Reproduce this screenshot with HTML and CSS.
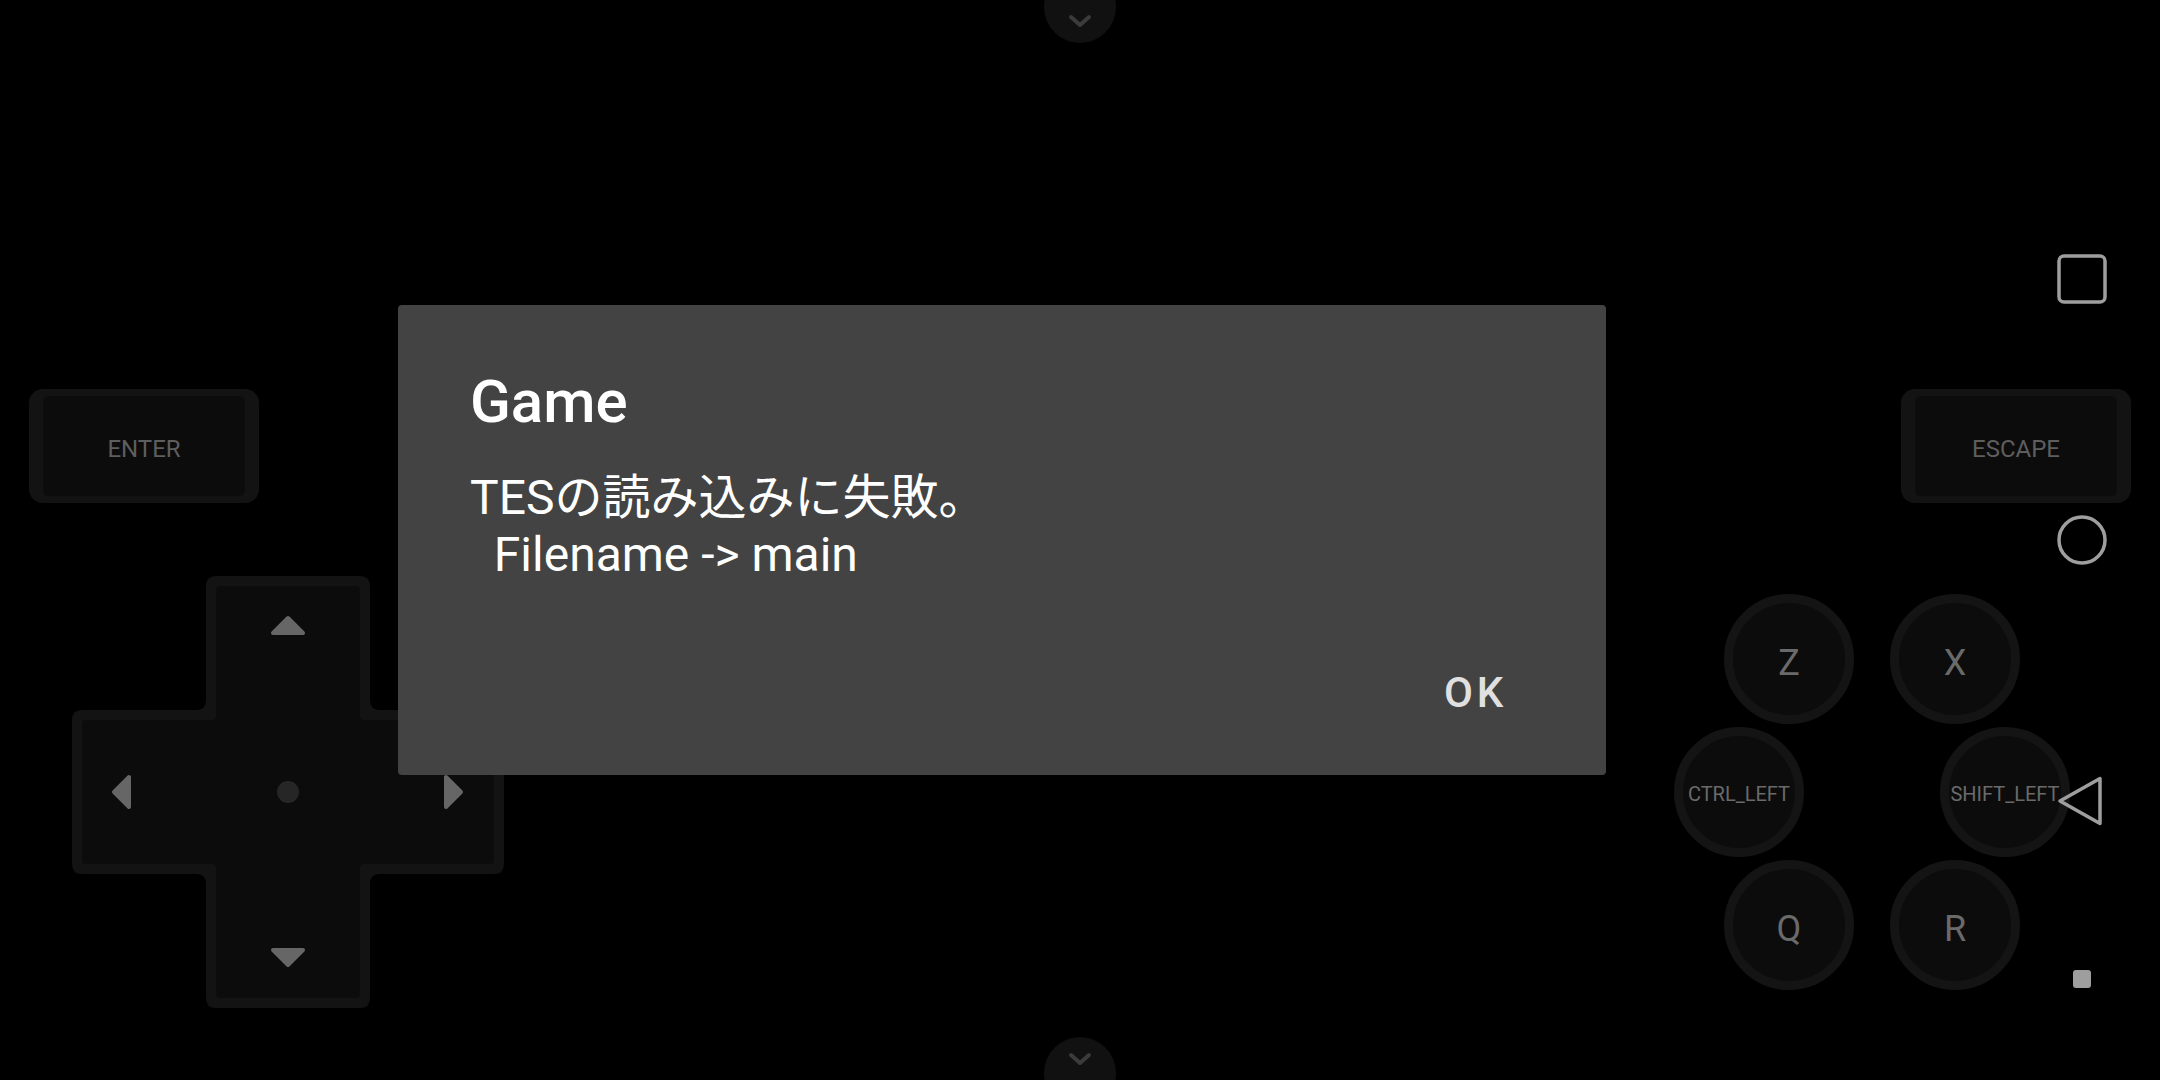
FILE: index.html
```html
<!DOCTYPE html>
<html lang="ja">
<head>
    <meta charset="UTF-8">
    <meta name="viewport" content="width=device-width, initial-scale=1.0">
    <title>Game</title>
    <link rel="stylesheet" href="styles.css">
</head>
<body>

    <div class="screen">

        <!-- game area, the dialog sits in its middle -->
        <div class="app">
            <div class="dialog">
                <h1 class="dialog-title">Game</h1>
                <p class="dialog-message">TESの読み込みに失敗。
  Filename -&gt; main</p>
                <div class="dialog-actions">
                    <button type="button" class="dialog-btn">OK</button>
                </div>
            </div>
        </div>

        <!-- system navigation bar -->
        <div class="navbar">
            <div class="nav-group">
                <svg class="nav-icon" width="50" height="50" viewBox="0 0 50 50">
                    <rect x="2" y="2" width="46" height="46" rx="5" fill="none" stroke="#9e9e9e" stroke-width="3.5"/>
                </svg>
                <svg class="nav-icon" width="50" height="50" viewBox="0 0 50 50">
                    <circle cx="25" cy="25" r="23" fill="none" stroke="#9e9e9e" stroke-width="3.5"/>
                </svg>
                <svg class="nav-icon" width="50" height="50" viewBox="0 0 50 50">
                    <polygon points="3,25 43,2.5 43,47.5" fill="none" stroke="#9e9e9e" stroke-width="3.5" stroke-linejoin="round"/>
                </svg>
            </div>
            <div class="nav-dot"></div>
        </div>

        <!-- virtual gamepad overlay -->
        <div class="pad">
            <div class="pull pull-top">
                <svg width="72" height="72" viewBox="0 0 72 72">
                    <polyline points="27,46 36,54 45,46" fill="none" stroke="#3b3b3b" stroke-width="4" stroke-linecap="round" stroke-linejoin="round"/>
                </svg>
            </div>
            <div class="pull pull-bottom">
                <svg width="72" height="72" viewBox="0 0 72 72">
                    <polyline points="27,18 36,26 45,18" fill="none" stroke="#3b3b3b" stroke-width="4" stroke-linecap="round" stroke-linejoin="round"/>
                </svg>
            </div>

            <div class="key key-enter"><span class="key-face">ENTER</span></div>
            <div class="key key-escape"><span class="key-face">ESCAPE</span></div>

            <svg class="dpad" width="432" height="432" viewBox="0 0 432 432">
                <path fill="#131313" d="M 144,0 H 288 Q 298,0 298,10 V 124 Q 298,134 308,134 H 422 Q 432,134 432,144 V 288 Q 432,298 422,298 H 308 Q 298,298 298,308 V 422 Q 298,432 288,432 H 144 Q 134,432 134,422 V 308 Q 134,298 124,298 H 10 Q 0,298 0,288 V 144 Q 0,134 10,134 H 124 Q 134,134 134,124 V 10 Q 134,0 144,0 Z"/>
                <path fill="#0c0c0c" d="M 148,10 H 284 Q 288,10 288,14 V 140 Q 288,144 292,144 H 418 Q 422,144 422,148 V 284 Q 422,288 418,288 H 292 Q 288,288 288,292 V 418 Q 288,422 284,422 H 148 Q 144,422 144,418 V 292 Q 144,288 140,288 H 14 Q 10,288 10,284 V 148 Q 10,144 14,144 H 140 Q 144,144 144,140 V 14 Q 144,10 148,10 Z"/>
                <circle cx="216" cy="216" r="11" fill="#262626"/>
                <g fill="#666" stroke="#666" stroke-width="4" stroke-linejoin="round">
                    <polygon points="216,42 231,57 201,57"/>
                    <polygon points="201,374 231,374 216,389"/>
                    <polygon points="57,201 57,231 42,216"/>
                    <polygon points="374,201 374,231 389,216"/>
                </g>
            </svg>

            <div class="btn-round btn-z">Z</div>
            <div class="btn-round btn-x">X</div>
            <div class="btn-round btn-ctrl small">CTRL_LEFT</div>
            <div class="btn-round btn-shift small">SHIFT_LEFT</div>
            <div class="btn-round btn-q">Q</div>
            <div class="btn-round btn-r">R</div>
        </div>

    </div>

</body>
</html>
```

FILE: styles.css
```css
html, body {
    margin: 0;
    padding: 0;
    background-color: #000;
}

body {
    font-family: Roboto, "Noto Sans CJK JP", sans-serif;
}

.screen {
    position: relative;
    width: 2160px;
    height: 1080px;
    display: flex;
    overflow: hidden;
}

.app {
    flex: 1;
    display: flex;
    align-items: center;
    justify-content: center;
    position: relative;
    z-index: 2;
}

/* dialog */
.dialog {
    width: 1208px;
    height: 470px;
    box-sizing: border-box;
    background-color: #434343;
    border-radius: 4px;
    padding: 61px 0 0 72px;
    display: flex;
    flex-direction: column;
}

.dialog-title {
    margin: 0;
    font-size: 60px;
    line-height: 72px;
    font-weight: 500;
    color: #fff;
}

.dialog-message {
    margin: 31px 0 0 0;
    font-family: Roboto, "Noto Sans CJK JP", sans-serif;
    font-size: 48px;
    line-height: 57px;
    color: #fff;
    white-space: pre;
}

.dialog-actions {
    margin-top: auto;
    display: flex;
    justify-content: flex-end;
    padding: 0 99px 58px 0;
}

.dialog-btn {
    background: none;
    border: none;
    padding: 0;
    font-family: Roboto, sans-serif;
    font-size: 42px;
    line-height: 48px;
    font-weight: 500;
    letter-spacing: 0.09em;
    color: #e0e0e0;
    cursor: pointer;
}

/* navigation bar */
.navbar {
    width: 156px;
    flex-shrink: 0;
    display: flex;
    flex-direction: column;
    align-items: center;
    padding: 254px 0 92px 0;
    box-sizing: border-box;
    position: relative;
    z-index: 3;
}

.nav-group {
    display: flex;
    flex-direction: column;
    gap: 211px;
}

.nav-icon {
    display: block;
    flex-shrink: 0;
}

.nav-dot {
    margin-top: auto;
    width: 18px;
    height: 18px;
    flex-shrink: 0;
    border-radius: 3px;
    background-color: #9e9e9e;
}

/* gamepad overlay */
.pad {
    position: absolute;
    top: 0;
    left: 0;
    width: 2160px;
    height: 1080px;
    z-index: 1;
}

.pull {
    position: absolute;
    left: 1044px;
    width: 72px;
    height: 72px;
    border-radius: 50%;
    background-color: #111;
}

.pull svg {
    display: block;
}

.pull-top {
    top: -29px;
}

.pull-bottom {
    top: 1037px;
}

.key {
    position: absolute;
    top: 389px;
    width: 230px;
    height: 114px;
    box-sizing: border-box;
    padding: 7px 14px;
    background-color: #131313;
    border-radius: 14px;
    display: flex;
}

.key-enter {
    left: 29px;
}

.key-escape {
    left: 1901px;
}

.key-face {
    flex: 1;
    display: flex;
    align-items: center;
    justify-content: center;
    background-color: #0c0c0c;
    border-radius: 6px;
    font-size: 24px;
    color: #5e5e5e;
    padding-top: 5px;
}

.dpad {
    position: absolute;
    left: 72px;
    top: 576px;
}

.btn-round {
    position: absolute;
    width: 130px;
    height: 130px;
    box-sizing: border-box;
    border: 9px solid #141414;
    border-radius: 50%;
    background-color: #0c0c0c;
    display: flex;
    align-items: center;
    justify-content: center;
    font-size: 36px;
    color: #6a6a6a;
    padding-top: 8px;
}

.btn-round.small {
    font-size: 20px;
    color: #6a6a6a;
    padding-top: 4px;
}

.btn-z { left: 1724px; top: 594px; }
.btn-x { left: 1890px; top: 594px; }
.btn-ctrl { left: 1674px; top: 727px; }
.btn-shift { left: 1940px; top: 727px; font-size: 18.5px; }
.btn-q { left: 1724px; top: 860px; }
.btn-r { left: 1890px; top: 860px; }
```
